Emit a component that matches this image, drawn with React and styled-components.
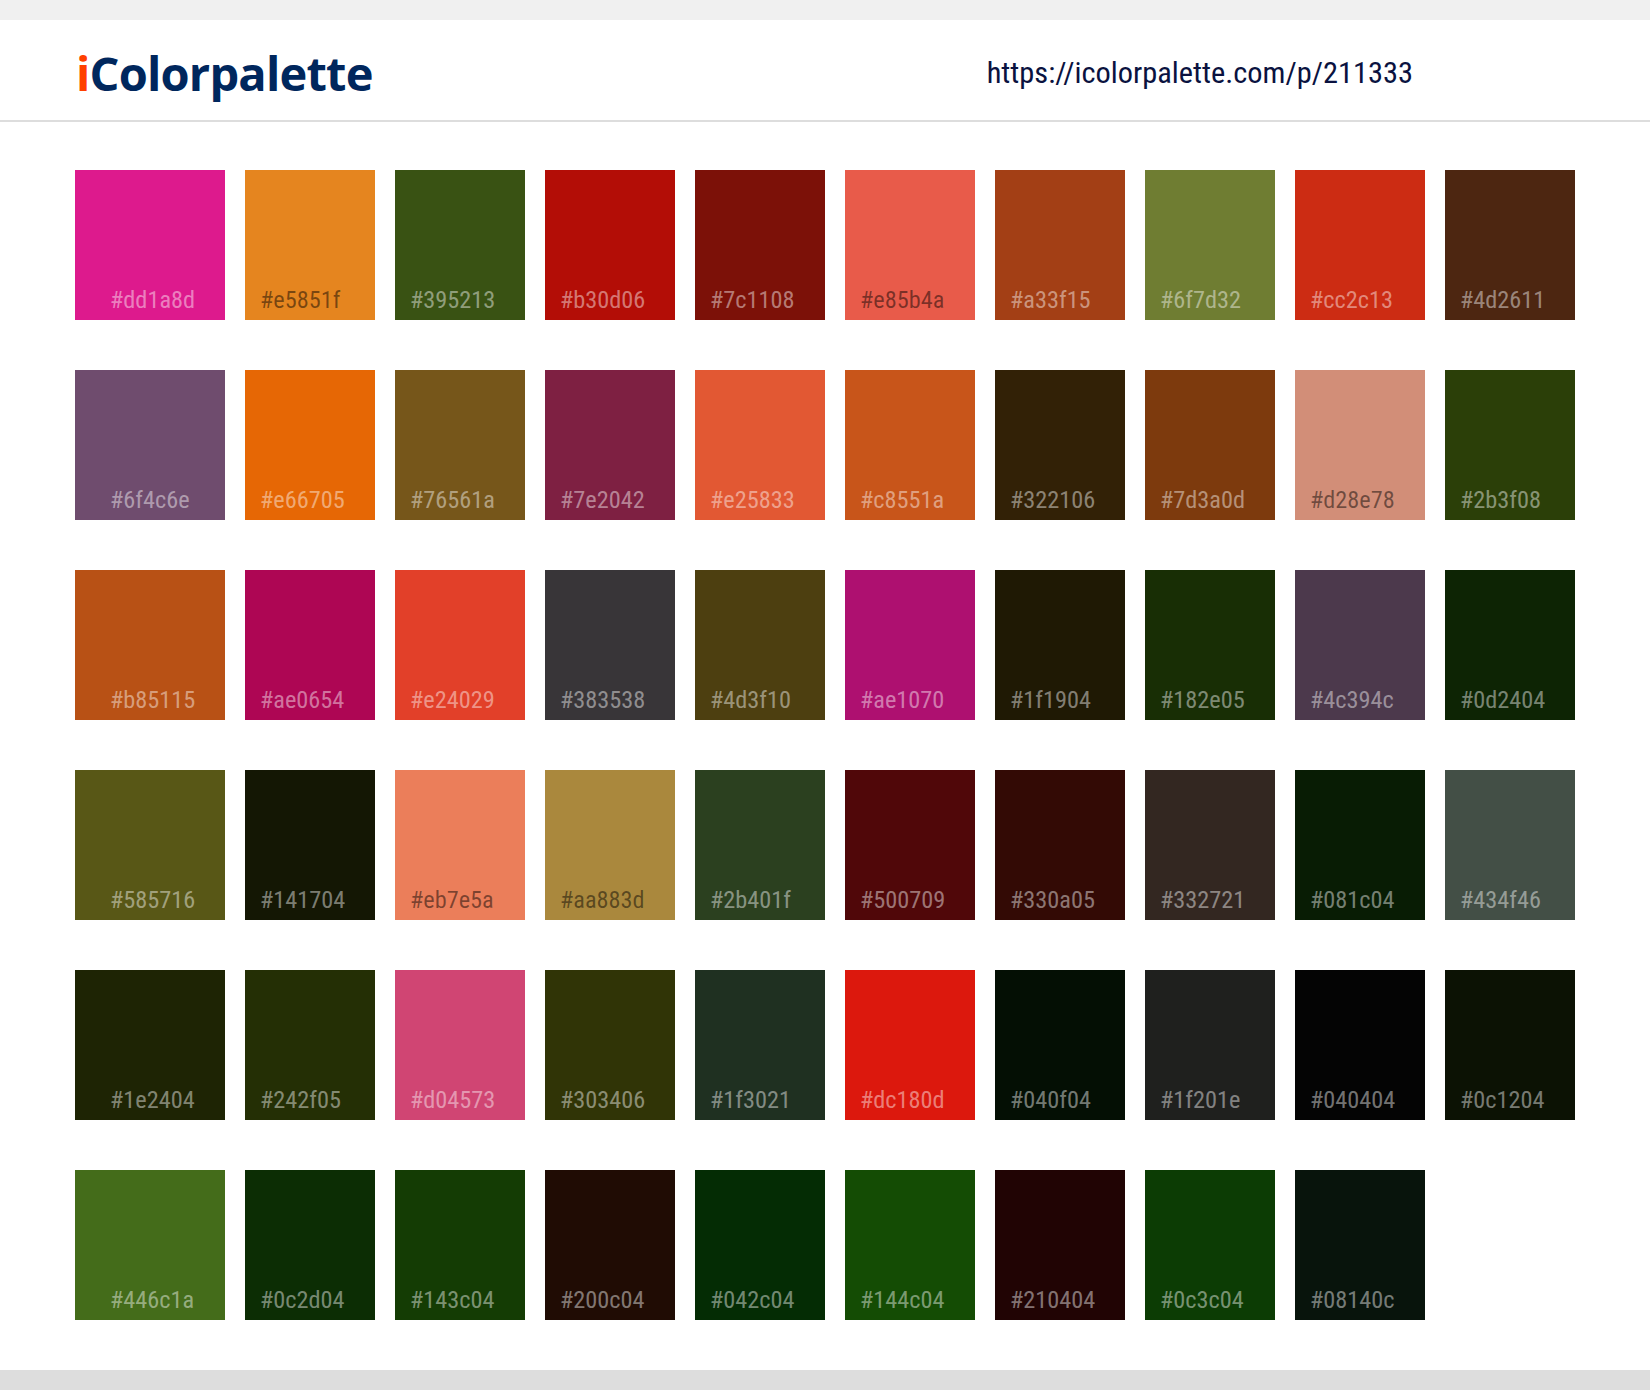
import React from "react";
import styled, { createGlobalStyle } from "styled-components";

const colors = ["dd1a8d","e5851f","395213","b30d06","7c1108","e85b4a","a33f15","6f7d32","cc2c13","4d2611","6f4c6e","e66705","76561a","7e2042","e25833","c8551a","322106","7d3a0d","d28e78","2b3f08","b85115","ae0654","e24029","383538","4d3f10","ae1070","1f1904","182e05","4c394c","0d2404","585716","141704","eb7e5a","aa883d","2b401f","500709","330a05","332721","081c04","434f46","1e2404","242f05","d04573","303406","1f3021","dc180d","040f04","1f201e","040404","0c1204","446c1a","0c2d04","143c04","200c04","042c04","144c04","210404","0c3c04","08140c"];
const darkText = new Set(["e5851f","e85b4a","d28e78","eb7e5a","aa883d"]);

const Global = createGlobalStyle`
  html, body { margin: 0; padding: 0; background: #fff; }
`;
const Page = styled.div`
  width: 1650px; height: 1390px; display: flex; flex-direction: column;
  background: #fff; border-top: 20px solid #f0f0f0; border-bottom: 20px solid #ddd; box-sizing: border-box;
`;
const Header = styled.header`
  height: 102px; box-sizing: border-box; border-bottom: 2px solid #ddd;
  display: flex; align-items: center; justify-content: space-between; padding: 0 237px 0 76px;
`;
const Logo = styled.div`
  font-family: "Open Sans", sans-serif; font-weight: 700; font-size: 47px; letter-spacing: -0.8px; color: #00275d; line-height: 1; margin-top: 7px;
  span { color: #ff4000; }
`;
const Url = styled.div`
  font-family: Roboto, sans-serif; font-stretch: 75%; font-size: 30.4px; color: #0a1240; line-height: 1; margin-top: 6px;
`;
const Grid = styled.main`
  display: grid; grid-template-columns: 150px repeat(9, 130px); grid-auto-rows: 150px; gap: 50px 20px; padding: 48px 75px 0;
`;
const Swatch = styled.div`
  background: ${p => p.$bg}; display: flex; align-items: flex-end; padding: 0 0 6px ${p => p.$first ? 35 : 15}px; box-sizing: border-box;
`;
const Hex = styled.span`
  font-family: Roboto, sans-serif; font-stretch: 75%; font-size: 24.3px; line-height: 28px; color: ${p => p.$dark ? "rgba(0,0,0,.47)" : "rgba(255,255,255,.45)"};
`;

export default function App() {
  return (
    <Page>
      <Global />
      <Header>
        <Logo><span>i</span>Colorpalette</Logo>
        <Url>https://icolorpalette.com/p/211333</Url>
      </Header>
      <Grid>
        {colors.map((c, i) => (
          <Swatch key={c} $bg={"#" + c} $first={i % 10 === 0}>
            <Hex $dark={darkText.has(c)}>#{c}</Hex>
          </Swatch>
        ))}
      </Grid>
    </Page>
  );
}
